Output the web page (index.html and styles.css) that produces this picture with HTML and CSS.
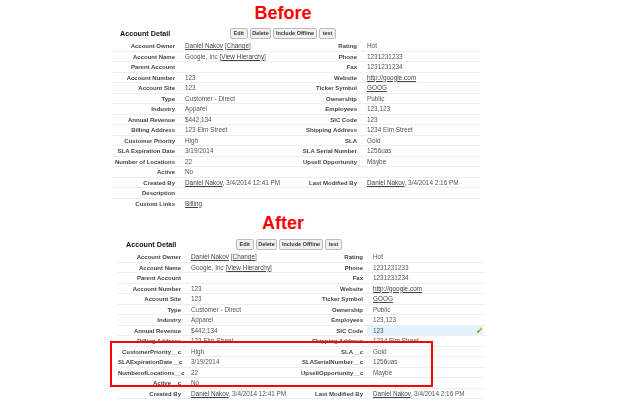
FILE: index.html
```html
<!DOCTYPE html>
<html lang="en">
<head>
<meta charset="utf-8">
<title>Account Detail</title>
<link rel="stylesheet" href="styles.css">
</head>
<body>
<main class="page">
  <h1 class="caption">Before</h1>
  <section class="detail">
    <div class="toolbar">
      <h2 class="title">Account Detail</h2>
      <div class="buttons"><button class="btn">Edit</button><button class="btn">Delete</button><button class="btn">Include Offline</button><button class="btn">test</button></div>
    </div>
    <div class="row"><b>Account Owner</b><span><a>Daniel Nakov</a> [<a>Change</a>]</span><b>Rating</b><span>Hot</span></div>
    <div class="row"><b>Account Name</b><span>Google, Inc [<a>View Hierarchy</a>]</span><b>Phone</b><span>1231231233</span></div>
    <div class="row"><b>Parent Account</b><span></span><b>Fax</b><span>1231231234</span></div>
    <div class="row"><b>Account Number</b><span>123</span><b>Website</b><span><a>http://google.com</a></span></div>
    <div class="row"><b>Account Site</b><span>123</span><b>Ticker Symbol</b><span><a>GOOG</a></span></div>
    <div class="row"><b>Type</b><span>Customer - Direct</span><b>Ownership</b><span>Public</span></div>
    <div class="row"><b>Industry</b><span>Apparel</span><b>Employees</b><span>123,123</span></div>
    <div class="row"><b>Annual Revenue</b><span>$442,134</span><b>SIC Code</b><span>123</span></div>
    <div class="row"><b>Billing Address</b><span>123 Elm Street</span><b>Shipping Address</b><span>1234 Elm Street</span></div>
    <div class="row"><b>Customer Priority</b><span>High</span><b>SLA</b><span>Gold</span></div>
    <div class="row"><b>SLA Expiration Date</b><span>3/19/2014</span><b>SLA Serial Number</b><span>1256uas</span></div>
    <div class="row"><b>Number of Locations</b><span>22</span><b>Upsell Opportunity</b><span>Maybe</span></div>
    <div class="row"><b>Active</b><span>No</span><b></b><span></span></div>
    <div class="row"><b>Created By</b><span><a>Daniel Nakov</a>, 3/4/2014 12:41 PM</span><b>Last Modified By</b><span><a>Daniel Nakov</a>, 3/4/2014 2:16 PM</span></div>
    <div class="row"><b>Description</b><span></span><b></b><span></span></div>
    <div class="row row-plain"><b>Custom Links</b><span><a>Billing</a></span><b></b><span></span></div>
  </section>

  <h1 class="caption caption-after">After</h1>
  <section class="detail detail-after">
    <div class="toolbar">
      <h2 class="title">Account Detail</h2>
      <div class="buttons"><button class="btn">Edit</button><button class="btn">Delete</button><button class="btn">Include Offline</button><button class="btn">test</button></div>
    </div>
    <div class="row"><b>Account Owner</b><span><a>Daniel Nakov</a> [<a>Change</a>]</span><b>Rating</b><span>Hot</span></div>
    <div class="row"><b>Account Name</b><span>Google, Inc [<a>View Hierarchy</a>]</span><b>Phone</b><span>1231231233</span></div>
    <div class="row"><b>Parent Account</b><span></span><b>Fax</b><span>1231231234</span></div>
    <div class="row"><b>Account Number</b><span>123</span><b>Website</b><span><a>http://google.com</a></span></div>
    <div class="row"><b>Account Site</b><span>123</span><b>Ticker Symbol</b><span><a>GOOG</a></span></div>
    <div class="row"><b>Type</b><span>Customer - Direct</span><b>Ownership</b><span>Public</span></div>
    <div class="row"><b>Industry</b><span>Apparel</span><b>Employees</b><span>123,123</span></div>
    <div class="row"><b>Annual Revenue</b><span>$442,134</span><b>SIC Code</b><span class="editing">123<svg class="pencil" viewBox="0 0 6 6" width="6" height="6" aria-hidden="true"><path d="M0.3 5.7 L0.9 3.8 L4.2 0.5 L5.5 1.8 L2.2 5.1 Z" fill="#e0a91c"/><path d="M0.3 5.7 L0.9 3.8 L2.2 5.1 Z" fill="#3a3a3a"/></svg></span></div>
    <div class="row"><b>Billing Address</b><span>123 Elm Street</span><b>Shipping Address</b><span>1234 Elm Street</span></div>
    <div class="row"><b>CustomerPriority__c</b><span>High</span><b>SLA__c</b><span>Gold</span></div>
    <div class="row"><b>SLAExpirationDate__c</b><span>3/19/2014</span><b>SLASerialNumber__c</b><span>1256uas</span></div>
    <div class="row"><b>NumberofLocations__c</b><span>22</span><b>UpsellOpportunity__c</b><span>Maybe</span></div>
    <div class="row"><b>Active__c</b><span>No</span><b></b><span></span></div>
    <div class="row"><b>Created By</b><span><a>Daniel Nakov</a>, 3/4/2014 12:41 PM</span><b>Last Modified By</b><span><a>Daniel Nakov</a>, 3/4/2014 2:16 PM</span></div>
    <div class="redbox"></div>
  </section>
</main>
</body>
</html>
```
FILE: styles.css
```css
html, body {
  margin: 0;
  height: 400px;
  overflow: hidden;
  background: #fff;
}

.page {
  font-family: "Liberation Sans", Arial, sans-serif;
  color: #333;
}

.caption {
  margin: 0;
  width: 566px;
  height: 26px;
  font-size: 18px;
  line-height: 26px;
  font-weight: 700;
  color: #f00;
  text-align: center;
}

.caption-after {
  height: 28px;
  line-height: 29px;
}

.detail {
  position: relative;
  width: 368px;
  margin-left: 112px;
}

.detail-after {
  margin-left: 118px;
}

.toolbar {
  display: flex;
  align-items: center;
  height: 14px;
  margin-bottom: 1px;
  filter: blur(0.25px);
}

.title {
  margin: 0 0 0 8px;
  width: 110px;
  font-size: 7.2px;
  font-weight: 700;
  color: #111;
}

.buttons {
  display: flex;
  gap: 2.2px;
}

.btn {
  height: 11px;
  min-width: 17.5px;
  padding: 0 1.5px;
  border: 1px solid #bbb;
  border-radius: 2px;
  background: #f1f1f1;
  font: 700 5.5px "Liberation Sans", Arial, sans-serif;
  color: #333;
}

.row {
  display: grid;
  grid-template-columns: 63px 120px 62px 123px;
  height: 10.5px;
  box-sizing: border-box;
  border-bottom: 1px solid #eee;
  align-items: baseline;
  line-height: 9.5px;
  white-space: nowrap;
}

.row-plain {
  border-bottom: 0;
}

.row b::before,
.row span::before {
  content: "\200b";
}

.row b {
  font-size: 6px;
  font-weight: 700;
  color: #444;
  text-align: right;
  filter: blur(0.25px);
}

.row span {
  height: 9.5px;
  padding-left: 10px;
  font-size: 6.4px;
  color: #555;
  filter: blur(0.25px);
}

.row a {
  color: #444;
  text-decoration: underline;
}

.row .editing {
  display: flex;
  align-items: center;
  box-sizing: border-box;
  width: 116px;
  margin-left: 4px;
  padding-left: 6px;
  background: #e3f3ff;
}

.pencil {
  flex: none;
  margin-left: auto;
}

.redbox {
  position: absolute;
  left: -8px;
  top: 104px;
  width: 319px;
  height: 42px;
  border: 2px solid #f00;
}
```
